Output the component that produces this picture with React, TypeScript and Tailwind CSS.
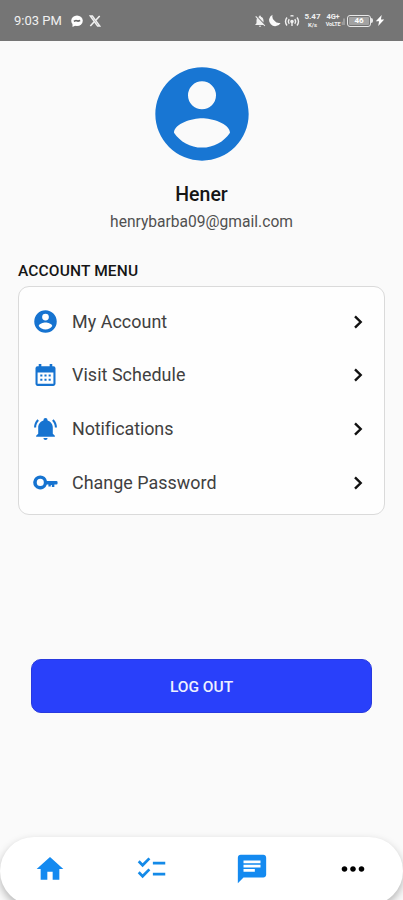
import React from "react";
import { MdHome, MdChecklist, MdChat, MdMoreHoriz, MdNotificationsOff } from "react-icons/md";

const accountPath =
  "M12,19.2C9.5,19.2 7.29,17.92 6,16C6.03,14 10,12.9 12,12.9C14,12.9 17.97,14 18,16C16.71,17.92 14.5,19.2 12,19.2M12,5A3,3 0 0,1 15,8A3,3 0 0,1 12,11A3,3 0 0,1 9,8A3,3 0 0,1 12,5M12,2A10,10 0 0,0 2,12A10,10 0 0,0 12,22A10,10 0 0,0 22,12C22,6.47 17.5,2 12,2Z";
const calendarPath =
  "M9,11V13H7V11H9M13,11V13H11V11H13M17,11V13H15V11H17M19.6,3A2,2 0 0,1 21.6,5V20A2,2 0 0,1 19.6,22H4.4C3.3,22 2.4,21.1 2.4,20V5A2,2 0 0,1 4.4,3H5.5V1H8V3H16V1H18.5V3H19.6M19.6,20V9H4.4V20H19.6M9,15V17H7V15H9M13,15V17H11V15H13M17,15V17H15V15H17Z";
const bellPath =
  "M21,19V20H3V19L5,17V11C5,7.9 7.03,5.17 10,4.29C10,4.19 10,4.1 10,4A2,2 0 0,1 12,2A2,2 0 0,1 14,4C14,4.1 14,4.19 14,4.29C16.97,5.17 19,7.9 19,11V17L21,19M14,21A2,2 0 0,1 12,23A2,2 0 0,1 10,21M19.75,3.19L18.33,4.61C20.04,6.3 21,8.6 21,11H23C23,8.07 21.84,5.25 19.75,3.19M1,11H3C3,8.6 3.96,6.3 5.67,4.61L4.25,3.19C2.16,5.25 1,8.07 1,11Z";
const keyPath =
  "M7 5.2a6.7 6.7 0 1 0 6.3 8.7h1.5v2h2.3v-1.4h1v1.9h2.4v-2.5h1.9a1.2 1.2 0 0 0 1.2-1.2v-1a1.2 1.2 0 0 0-1.2-1.2H13.4A6.7 6.7 0 0 0 7 5.2zm0 3.3a3.4 3.4 0 1 1 0 6.8 3.4 3.4 0 0 1 0-6.8z";

function Glyph({ d, className }: { d: string; className: string }) {
  return (
    <svg viewBox="0 0 24 24" fill="currentColor" fillRule="evenodd" className={className}>
      <path d={d} />
    </svg>
  );
}

const items = [
  { label: "My Account", icon: accountPath, text: "tracking-[0.05px]", size: "size-[27px]" },
  { label: "Visit Schedule", icon: calendarPath, text: "tracking-[0.05px]", size: "size-[25px]" },
  { label: "Notifications", icon: bellPath, text: "tracking-[-0.08px]", size: "size-[25px]" },
  { label: "Change Password", icon: keyPath, text: "tracking-[0.03px]", size: "size-[25px]" },
];

function StatusBar() {
  return (
    <header className="flex h-[41px] shrink-0 items-center bg-[#757575] pl-[14px] pr-[18px] text-[#f0f0f0]">
      <span className="text-[13px] leading-4">9:03 PM</span>
      <svg viewBox="0 0 12 12" className="ml-[9px] size-[12px]">
        <ellipse cx="6" cy="5.8" rx="5.8" ry="5.3" fill="#fff" />
        <path d="M1.5 9v3l3-1.5z" fill="#fff" />
        <path d="M2.8 6.2 5 5.5 7 6.1 9.2 5.4" fill="none" stroke="#666" strokeWidth="1.6" />
      </svg>
      <svg viewBox="0 0 12 12" className="ml-[6px] size-[12px]" fill="none" stroke="currentColor">
        <path d="M1.2 1h2.2l7.4 10H8.6z" strokeWidth="1.4" />
        <path d="M10.7 1 6.8 5.3M5.2 6.8 1.3 11" strokeWidth="1.6" />
      </svg>
      <div className="ml-auto flex items-center">
        <MdNotificationsOff className="size-[14px]" />
        <svg viewBox="0 0 12 12" className="ml-px size-[13px]" fill="#fafafa">
          <path d="M4.2.6A5.6 5.6 0 1 0 11.6 8.2 5.3 5.3 0 0 1 6 6.2 5.3 5.3 0 0 1 4.2.6z" />
        </svg>
        <svg viewBox="0 0 16 14" className="ml-[3px] h-[14px] w-[16px]" fill="none" stroke="currentColor" strokeWidth="1.4">
          <path d="M3 3.5q-3 4 0 8M13 3.5q3 4 0 8M5.3 5.2q-1.8 2.3 0 4.6M10.7 5.2q1.8 2.3 0 4.6M6.5 2.2Q8 1 9.5 2.2" />
          <circle cx="8" cy="7.5" r="1.1" fill="currentColor" />
          <path d="M8 8v4" />
        </svg>
        <div className="ml-[4px] flex w-[17px] flex-col items-center font-bold">
          <span className="text-[8px] leading-[8px]">5.47</span>
          <span className="text-[6px] leading-[7px]">K/s</span>
        </div>
        <div className="ml-[5px] flex w-[14px] flex-col items-center font-bold">
          <span className="text-[7.5px] leading-[8px] tracking-tight">4G+</span>
          <span className="text-[5.5px] leading-[7px] tracking-tight">VoLTE</span>
        </div>
        <svg viewBox="0 0 5 12" className="ml-px h-[12px] w-[4px]" fill="#b5b5b5">
          <path d="M1 7h1v4H1zM3 3h1.5v8H3z" />
        </svg>
        <div className="ml-[2px] flex h-[12px] w-[24px] items-center justify-center rounded-[3px] border border-[#e8e8e8] p-px">
          <span className="h-full w-full rounded-[1px] bg-[#a2a2a2] text-center text-[8px] font-bold leading-[8px] text-white">46</span>
        </div>
        <span className="h-[5px] w-[2px] rounded-r bg-[#e8e8e8]" />
        <svg viewBox="0 0 10 13" className="ml-[2px] h-[13px] w-[10px]" fill="#fff">
          <path d="M6.7 1 .8 7.2h3.3L3.2 12l6-6.4H5.9z" />
        </svg>
      </div>
    </header>
  );
}

export default function App() {
  return (
    <div className="flex h-[900px] w-full flex-col overflow-hidden bg-[#fafafa] font-['Roboto','Liberation_Sans',sans-serif] text-[#151515]">
      <StatusBar />
      <main className="flex min-h-0 flex-1 flex-col">
        <section className="flex flex-col items-center pt-[17px]">
          <Glyph d={accountPath} className="size-[112px] text-[#1876d3]" />
          <h1 className="mt-[13px] text-[19.5px] font-medium leading-6">Hener</h1>
          <p className="mt-[5px] text-[15.6px] leading-5 text-[#505050]">henrybarba09@gmail.com</p>
        </section>
        <section className="mx-[18px] mt-[29px]">
          <h2 className="text-[15.5px] font-medium leading-5 tracking-[0.15px]">ACCOUNT MENU</h2>
          <ul className="mt-[5px] flex h-[229px] flex-col rounded-[11px] border-[1.5px] border-[#dadada] bg-[#fefefe] pt-[8px]">
            {items.map((item) => (
              <li key={item.label} className="flex h-[53.6px] items-center pl-[12px] pr-[17px]">
                <span className="flex w-[28px] justify-center">
                  <Glyph d={item.icon} className={`${item.size} text-[#1673d0]`} />
                </span>
                <span className={`ml-[13px] flex-1 text-[17.9px] leading-6 text-[#404040] ${item.text}`}>{item.label}</span>
                <svg viewBox="0 0 18 18" className="size-[18px]" fill="none" stroke="#111" strokeWidth="2.4">
                  <path d="m6 3.3 5.7 5.7L6 14.7" />
                </svg>
              </li>
            ))}
          </ul>
        </section>
        <button className="mx-[31px] mt-[144px] h-[54px] rounded-[10px] border border-[#2839df] bg-[#2940fa] pt-[3px] text-[15.5px] font-medium text-[#eef0ff]">
          LOG OUT
        </button>
      </main>
      <nav className="-mb-[5px] flex h-[68px] shrink-0 items-center rounded-[34px] bg-white pb-[5px] shadow-[0_4px_9px_rgba(0,0,0,0.28)] *:flex *:flex-1 *:justify-center">
        <span><MdHome className="size-[32px] text-[#148af0]" /></span>
        <span><MdChecklist className="size-[33px] text-[#148ae8]" /></span>
        <span><MdChat className="size-[34px] text-[#148af0]" /></span>
        <span><MdMoreHoriz className="size-[34px] text-black" /></span>
      </nav>
    </div>
  );
}
